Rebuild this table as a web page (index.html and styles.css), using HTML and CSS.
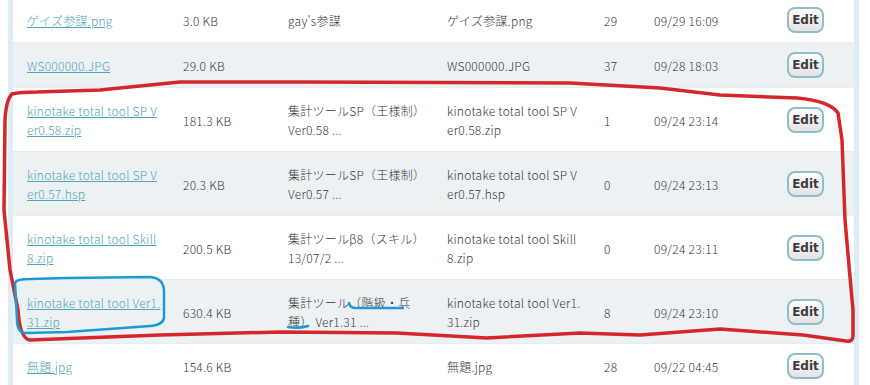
FILE: index.html
```html
<!DOCTYPE html>
<html lang="ja">
<head>
<meta charset="utf-8">
<title>Files</title>
<link rel="stylesheet" href="styles.css">
</head>
<body>
<div class="panel">
  <table class="files">
    <colgroup>
      <col class="c-name"><col class="c-size"><col class="c-desc"><col class="c-file"><col class="c-count"><col class="c-date"><col class="c-act">
    </colgroup>
    <tbody>
      <tr>
        <td class="name"><a href="#">ゲイズ参謀.png</a></td>
        <td>3.0 KB</td>
        <td class="desc">gay's参謀</td>
        <td class="file">ゲイズ参謀.png</td>
        <td>29</td>
        <td>09/29 16:09</td>
        <td class="act"><button class="edit">Edit</button></td>
      </tr>
      <tr>
        <td class="name"><a href="#">WS000000.JPG</a></td>
        <td>29.0 KB</td>
        <td class="desc"></td>
        <td class="file">WS000000.JPG</td>
        <td>37</td>
        <td>09/28 18:03</td>
        <td class="act"><button class="edit">Edit</button></td>
      </tr>
      <tr>
        <td class="name"><a href="#">kinotake total tool SP V<br>er0.58.zip</a></td>
        <td>181.3 KB</td>
        <td class="desc">集計ツールSP（王様制） Ver0.58 ...</td>
        <td class="file">kinotake total tool SP V<br>er0.58.zip</td>
        <td>1</td>
        <td>09/24 23:14</td>
        <td class="act"><button class="edit">Edit</button></td>
      </tr>
      <tr>
        <td class="name"><a href="#">kinotake total tool SP V<br>er0.57.hsp</a></td>
        <td>20.3 KB</td>
        <td class="desc">集計ツールSP（王様制） Ver0.57 ...</td>
        <td class="file">kinotake total tool SP V<br>er0.57.hsp</td>
        <td>0</td>
        <td>09/24 23:13</td>
        <td class="act"><button class="edit">Edit</button></td>
      </tr>
      <tr>
        <td class="name"><a href="#">kinotake total tool Skill<br>8.zip</a></td>
        <td>200.5 KB</td>
        <td class="desc">集計ツールβ8（スキル） 13/07/2 ...</td>
        <td class="file">kinotake total tool Skill<br>8.zip</td>
        <td>0</td>
        <td>09/24 23:11</td>
        <td class="act"><button class="edit">Edit</button></td>
      </tr>
      <tr>
        <td class="name"><a href="#">kinotake total tool Ver1.<br>31.zip</a></td>
        <td>630.4 KB</td>
        <td class="desc">集計ツール（階級・兵種） Ver1.31 ...</td>
        <td class="file">kinotake total tool Ver1.<br>31.zip</td>
        <td>8</td>
        <td>09/24 23:10</td>
        <td class="act"><button class="edit">Edit</button></td>
      </tr>
      <tr>
        <td class="name"><a href="#">無題.jpg</a></td>
        <td>154.6 KB</td>
        <td class="desc"></td>
        <td class="file">無題.jpg</td>
        <td>28</td>
        <td>09/22 04:45</td>
        <td class="act"><button class="edit">Edit</button></td>
      </tr>
    </tbody>
  </table>
</div>
<svg class="marks" width="870" height="385" viewBox="0 0 870 385" aria-hidden="true">
  <path class="red" d="M100 90 L180 82 L300 82 L570 83 L660 88 L720 95 L797 98 Q830 101 838 113 L842 140 L845 220 L850 277 L853 310 L853 336 Q853 342 846 341 L803 335 L720 329 L640 335 L580 333 L487 338 L397 333 L280 332 L160 335 L30 340 Q20 339 18 310 L10 270 L4 210 L5 120 Q6 100 12 94 Q20 92 37 92 Z"/>
  <path class="blue" d="M15 283 Q16 279 30 279 L67 278 L150 277 Q163 278 164 290 L164 318 Q163 325 150 326 L123 328 L67 332 L25 333 Q17 332 17 320 Z"/>
  <path class="blue" d="M349 303 Q350 308 356 308 L403 308"/>
  <path class="blue" d="M288 327 Q298 329 308 326"/>
</svg>
</body>
</html>
```

FILE: styles.css
```css
html, body {
  margin: 0;
  padding: 0;
  background: #ffffff;
}

body {
  padding: 0 11px 0 8px;
  font-family: "Noto Sans CJK JP", "Noto Sans", sans-serif;
  font-weight: 300;
  font-size: 12px;
  line-height: 19px;
  color: #383838;
  position: relative;
  height: 385px;
  overflow: hidden;
}

.panel {
  width: 841px;
  margin-top: -3px;
  border-left: 5px solid #deecf5;
  border-right: 5px solid #deecf5;
}

.files {
  width: 841px;
  border-collapse: collapse;
  table-layout: fixed;
}

.c-name { width: 156px; }
.c-size { width: 105px; }
.c-desc { width: 159px; }
.c-file { width: 157px; }
.c-count { width: 50px; }
.c-date { width: 134px; }
.c-act { width: 80px; }

.files td {
  padding: 13px 14px 12px 14px;
  border-top: 1px solid #e4edf1;
  vertical-align: middle;
  letter-spacing: 0.25px;
}

.files td.name,
.files td.file {
  padding-right: 4px;
  white-space: nowrap;
}

.files td.desc {
  padding-right: 7px;
}

.files tr:nth-child(even) td {
  background: #ecf1f4;
}

.files tr:first-child td {
  border-top: 1px solid #ffffff;
}

.files a {
  color: #52a4bb;
  text-decoration: underline;
}

.files td.act {
  padding: 0 30px 0 0;
  text-align: right;
  letter-spacing: 0;
}

.edit {
  width: 37px;
  height: 26px;
  padding: 0;
  border: 2px solid #8fbdcc;
  border-radius: 8px;
  background: linear-gradient(#ffffff, #e3e3e3);
  font-family: "DejaVu Sans", sans-serif;
  font-weight: bold;
  font-size: 12px;
  color: #3c3c3c;
  vertical-align: middle;
}

.marks {
  position: absolute;
  left: 0;
  top: 0;
  pointer-events: none;
}

.marks path {
  fill: none;
  stroke-linecap: round;
  stroke-linejoin: round;
}

.marks .red {
  stroke: #d4262b;
  stroke-width: 3.5;
}

.marks .blue {
  stroke: #1d9ad6;
  stroke-width: 2.5;
}
```
